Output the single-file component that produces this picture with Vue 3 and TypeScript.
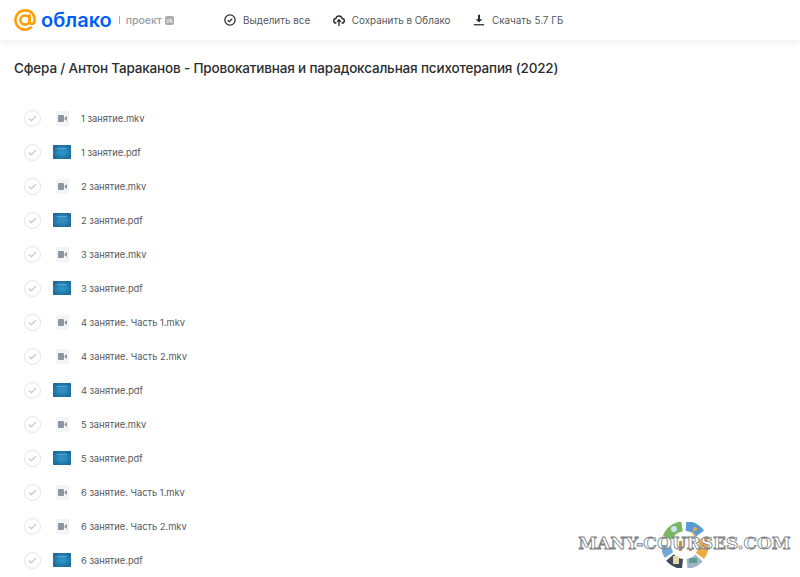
<script setup lang="ts">
interface FileRow { name: string; kind: 'mkv' | 'pdf' }
const names: string[] = [
  '1 занятие.mkv', '1 занятие.pdf', '2 занятие.mkv', '2 занятие.pdf', '3 занятие.mkv', '3 занятие.pdf',
  '4 занятие. Часть 1.mkv', '4 занятие. Часть 2.mkv', '4 занятие.pdf', '5 занятие.mkv', '5 занятие.pdf',
  '6 занятие. Часть 1.mkv', '6 занятие. Часть 2.mkv', '6 занятие.pdf',
]
const files: FileRow[] = names.map((name) => ({ name, kind: name.endsWith('pdf') ? 'pdf' : 'mkv' }))
</script>

<template>
  <div class="page">
    <header class="header">
      <div class="logo">
        <svg class="at" width="22" height="22" viewBox="0 0 24 24" fill="none" stroke="#ff9e00" stroke-width="2.8">
          <circle cx="12" cy="12" r="5" />
          <path d="M17 7v6.600c0 3.400 5.200 3.400 5.400-.6C23 6 18.500 1.500 12 1.500A10.500 10.500 0 1 0 18.500 20.300" stroke-linecap="round" />
        </svg>
        <span class="brand">облако</span>
        <span class="sep"></span>
        <span class="project">проект</span>
        <span class="vk">vk</span>
      </div>
      <nav class="actions">
        <div class="action">
          <svg width="12" height="12" viewBox="0 0 14 14" fill="none" stroke="#2c2d2e" stroke-width="1.500">
            <circle cx="7" cy="7" r="6" />
            <path d="M4.300 7.200l1.900 1.800 3.500-3.600" />
          </svg>
          <span>Выделить все</span>
        </div>
        <div class="action">
          <svg width="12" height="12" viewBox="0 0 14 14" fill="none" stroke="#2c2d2e" stroke-width="1.600">
            <path d="M4 10.500H3.500A2.600 2.600 0 0 1 3.300 5.300 3.800 3.800 0 0 1 10.700 5.300 2.600 2.600 0 0 1 10.500 10.500H10" />
            <path d="M7 14V7M4.800 9L7 6.800 9.200 9" />
          </svg>
          <span>Сохранить в Облако</span>
        </div>
        <div class="action">
          <svg width="12" height="12" viewBox="0 0 14 14" fill="#2c2d2e">
            <path d="M5.800 1h2.400v5h2.800L7 10 3 6h2.800z" />
            <rect x="1" y="11.800" width="12" height="1.500" />
          </svg>
          <span>Скачать 5.7 ГБ</span>
        </div>
      </nav>
    </header>

    <h1 class="title">Сфера / Антон Тараканов - Провокативная и парадоксальная психотерапия (2022)</h1>

    <ul class="list">
      <li v-for="file in files" :key="file.name" class="row">
        <span class="check">
          <svg width="9" height="7" viewBox="0 0 10 8" fill="none" stroke="#c0c4c8" stroke-width="1.300">
            <path d="M1 4l2.700 2.500L9 1.300" />
          </svg>
        </span>
        <span class="thumb">
          <span v-if="file.kind === 'mkv'" class="doc">
            <svg width="9" height="7" viewBox="0 0 9 7" fill="#8c95a4">
              <rect width="6" height="7" rx="1" />
              <path d="M6.500 3L9 1v5L6.500 4z" />
            </svg>
          </span>
          <span v-else class="cover"><i></i></span>
        </span>
        <span class="name">{{ file.name }}</span>
      </li>
    </ul>

    <div class="mark">
      <svg class="globe" width="46" height="46" viewBox="0 0 46 46" fill="none" stroke-width="10">
        <path d="M5.500 15.500A19 19 0 0 1 20 4.200" stroke="#7bb661" />
        <path d="M24 4A19 19 0 0 1 38 11.500" stroke="#5b9bd5" />
        <path d="M40.500 16A19 19 0 0 1 38 34" stroke="#eeaa45" />
        <path d="M4 23A19 19 0 0 0 7 33" stroke="#6fa8d6" />
        <path d="M8 35.500A19 19 0 0 0 20.500 42" stroke="#3e4b5e" />
        <path d="M25 42A19 19 0 0 0 37 36" stroke="#9db6c9" />
        <circle cx="33" cy="7" r="2" fill="#eeaa45" stroke="none" />
        <path d="M30 9l5 9" stroke="#eeaa45" stroke-width="1.500" />
        <circle cx="12" cy="7" r="3" fill="#cfe3f2" stroke="none" />
        <rect x="11" y="34" width="6" height="8" fill="#e8d9a8" stroke="none" />
        <rect x="27" y="36" width="8" height="5" fill="#5d9b8f" stroke="none" />
        <path d="M17 19h3v10h-3zM27 19h3v10h-3z" fill="#c9912f" stroke="none" />
      </svg>
      <span class="mark-text">MANY-COURSES.COM</span>
    </div>
  </div>
</template>

<style scoped>
.page {
  position: relative;
  width: 800px;
  height: 577px;
  overflow: hidden;
  background: #fff;
  font-family: Inter, "Noto Sans", sans-serif;
  color: #333;
}
.header {
  height: 40px;
  display: flex;
  align-items: center;
  box-shadow: 0 2px 8px rgba(0, 0, 0, 0.07);
}
.logo {
  display: flex;
  align-items: center;
  margin-left: 14px;
  width: 210px;
}
.brand {
  margin-left: 5px;
  font-size: 20px;
  font-weight: 600;
  color: #005ff9;
}
.sep {
  width: 1px;
  height: 8px;
  margin: 0 6px 0 7px;
  background: #a9adb2;
}
.project {
  font-size: 10.500px;
  font-weight: 500;
  color: #9a9da1;
}
.vk {
  margin-left: 3px;
  width: 9px;
  height: 9px;
  border-radius: 2px;
  background: #a8abaf;
  color: #fff;
  font-size: 6px;
  line-height: 9px;
  text-align: center;
}
.actions {
  display: flex;
  gap: 22.500px;
}
.action {
  display: flex;
  align-items: center;
  gap: 7px;
  font-size: 9.900px;
  color: #55585c;
}
.title {
  margin: 0;
  padding: 20px 0 0 14px;
  height: 57px;
  box-sizing: border-box;
  font-size: 13.500px;
  font-weight: 500;
  line-height: 17px;
  letter-spacing: -0.170px;
  white-space: nowrap;
  color: #2c2d2e;
}
.list {
  list-style: none;
  margin: 4px 0 0;
  padding: 0 0 0 24px;
}
.row {
  height: 34px;
  display: flex;
  align-items: center;
}
.check {
  width: 17px;
  height: 17px;
  box-sizing: border-box;
  border: 1px solid #e2e4e7;
  border-radius: 50%;
  display: flex;
  align-items: center;
  justify-content: center;
}
.thumb {
  width: 18px;
  margin-left: 12px;
  display: flex;
  justify-content: center;
}
.doc {
  width: 13px;
  height: 15px;
  background: #f3f4f6;
  display: flex;
  align-items: center;
  justify-content: center;
}
.cover {
  width: 18px;
  height: 14px;
  border-radius: 1px;
  background: radial-gradient(ellipse at 50% 50%, #2f8fc4 20%, #17628f 95%);
  display: flex;
  justify-content: center;
}
.cover i {
  width: 10px;
  height: 1px;
  margin-top: 3px;
  background: #6cb6e0;
  opacity: 0.7;
}
.name {
  margin-left: 10px;
  font-size: 9.300px;
  color: #55585c;
}
.mark {
  position: absolute;
  left: 577px;
  top: 516px;
  width: 215px;
  height: 54px;
  display: flex;
  align-items: center;
  justify-content: center;
}
.globe {
  position: absolute;
  left: 85px;
  top: 6px;
}
.mark-text {
  position: relative;
  font-family: "DejaVu Serif", serif;
  font-size: 17px;
  font-weight: 700;
  letter-spacing: 0;
  white-space: nowrap;
  color: #fff;
  -webkit-text-stroke: 0.8px #7d7f82;
}
</style>
